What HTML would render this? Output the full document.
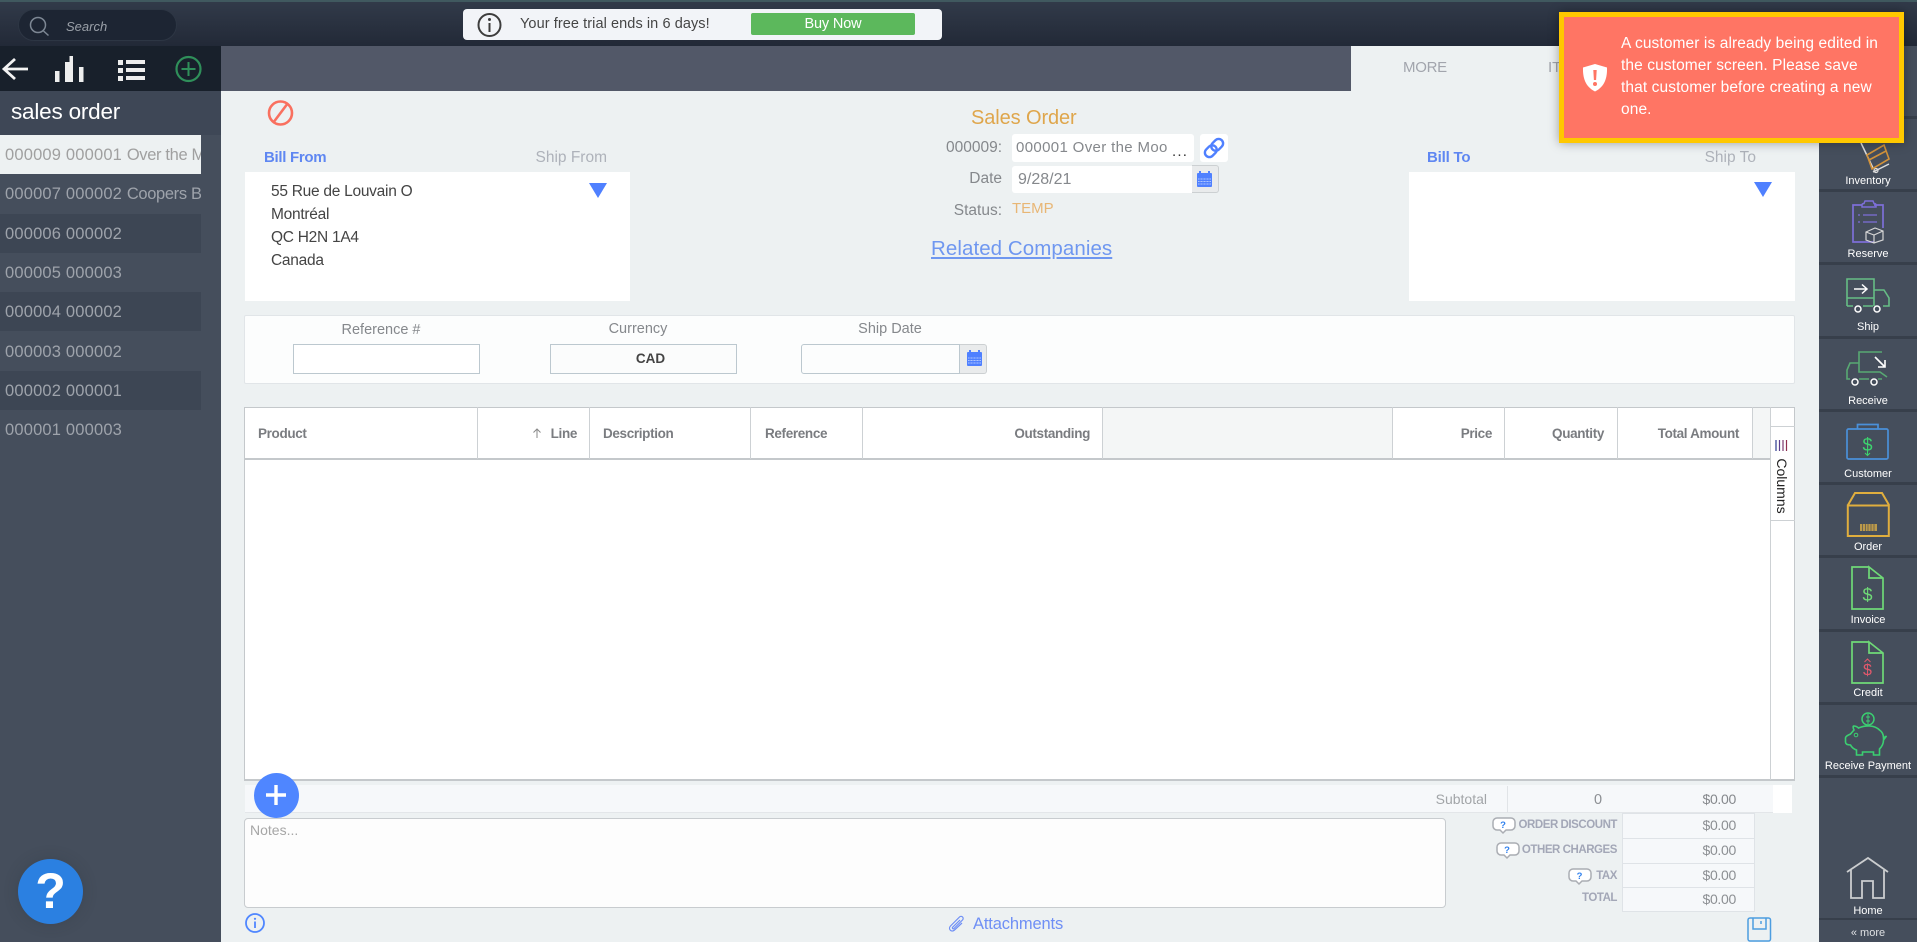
<!DOCTYPE html>
<html><head><meta charset="utf-8"><title>Sales Order</title>
<style>
*{box-sizing:border-box}
html,body{margin:0;padding:0;width:1917px;height:942px;overflow:hidden;background:#edf1f2;font-family:"Liberation Sans",sans-serif}
.a{position:absolute;white-space:nowrap}
.l{position:absolute;left:0;width:201px;height:39.3px;line-height:41.5px;padding-left:5px;font-size:16.5px;color:#9ea3ab;overflow:hidden;white-space:nowrap;letter-spacing:.18px}
.l span{letter-spacing:-.35px}
.h{position:absolute;top:408px;height:52px;line-height:52px;font-size:13.5px;font-weight:bold;color:#7a7c80;white-space:nowrap;letter-spacing:-.35px}
.v{position:absolute;top:407px;width:1px;height:52px;background:#cdd1d4}
.s{position:absolute;left:1819px;width:98px;height:3px;background:#373f4b}
.t{position:absolute;left:1819px;width:98px;text-align:center;font-size:11px;color:#fff;line-height:14px;white-space:nowrap}
.g{font-size:15.5px;color:#85888c}
.k{font-size:11.5px;font-weight:bold;color:#a3a7b7;line-height:14px;letter-spacing:-.45px}
.tr{position:absolute;left:1622px;width:133px;background:#f6f8fa;border:1px solid #dfe3e7;text-align:right;padding-right:18px;font-size:14px;letter-spacing:-.3px;color:#8c8f93}
</style></head><body>

<!-- top bar -->
<div class="a" style="left:0;top:0;width:1917px;height:46px;background:linear-gradient(#323b4a,#222937)"></div>
<div class="a" style="left:0;top:0;width:1917px;height:2px;background:#40595f"></div>
<div class="a" style="left:18px;top:9px;width:159px;height:32px;border-radius:16px;background:#1d2533;border:1px solid #2d3644"></div>
<div class="a" style="left:66px;top:18px;font-size:13px;font-style:italic;color:#9aa0a8;line-height:17px">Search</div>

<div class="a" style="left:463px;top:9px;width:479px;height:31px;background:#f2f4f8;border-radius:4px"></div>
<div class="a" style="left:520px;top:14px;font-size:14.5px;color:#454545;line-height:20px;letter-spacing:.08px">Your free trial ends in 6 days!</div>
<div class="a" style="left:751px;top:13px;width:164px;height:22px;background:#5cb85c;border-radius:2px;color:#fff;text-align:center;font-size:14.5px;line-height:22px;letter-spacing:-.15px">Buy Now</div>

<!-- sub bar -->
<div class="a" style="left:0;top:46px;width:221px;height:45px;background:#18202b"></div>
<div class="a" style="left:221px;top:46px;width:1130px;height:45px;background:#525868"></div>
<div class="a" style="left:1403px;top:58px;font-size:15px;color:#a2a5ad;line-height:20px;letter-spacing:-.3px">MORE</div>
<div class="a" style="left:1548px;top:58px;font-size:15px;color:#a2a5ad;line-height:20px">ITEMS</div>

<!-- left sidebar -->
<div class="a" style="left:0;top:91px;width:221px;height:851px;background:#454e5c"></div>
<div class="a" style="left:0;top:91px;width:221px;height:44px;background:#3e4756"></div>
<div class="a" style="left:11px;top:98px;font-size:22.5px;color:#fff;line-height:28px;letter-spacing:-.2px">sales order</div>
<div class="l" style="top:135px;background:#edf1f2;color:#a0a0a0">000009 000001 <span>Over the Moo</span></div>
<div class="l" style="top:174.3px">000007 000002 <span>Coopers Brewery</span></div>
<div class="l" style="top:213.6px;background:#3d4654">000006 000002</div>
<div class="l" style="top:252.9px">000005 000003</div>
<div class="l" style="top:292.2px;background:#3d4654">000004 000002</div>
<div class="l" style="top:331.5px">000003 000002</div>
<div class="l" style="top:370.8px;background:#3d4654">000002 000001</div>
<div class="l" style="top:410.1px">000001 000003</div>

<!-- right sidebar -->
<div class="a" style="left:1819px;top:46px;width:98px;height:896px;background:#454e5c"></div>
<div class="s" style="top:116px"></div><div class="s" style="top:189px"></div><div class="s" style="top:262px"></div><div class="s" style="top:336px"></div><div class="s" style="top:409px"></div><div class="s" style="top:482px"></div><div class="s" style="top:555px"></div><div class="s" style="top:629px"></div><div class="s" style="top:702px"></div><div class="s" style="top:775px"></div><div class="s" style="top:918px;height:2px"></div>
<div class="t" style="top:174px">Inventory</div>
<div class="t" style="top:247px">Reserve</div>
<div class="t" style="top:320px">Ship</div>
<div class="t" style="top:394px">Receive</div>
<div class="t" style="top:467px">Customer</div>
<div class="t" style="top:540px">Order</div>
<div class="t" style="top:613px">Invoice</div>
<div class="t" style="top:686px">Credit</div>
<div class="t" style="top:759px">Receive Payment</div>
<div class="t" style="top:904px">Home</div>
<div class="t" style="top:926px;color:#dfe1e4">« more</div>

<!-- address blocks -->
<div class="a" style="left:264px;top:148px;font-size:15px;font-weight:bold;color:#5f87f2;line-height:20px;letter-spacing:-.3px">Bill From</div>
<div class="a" style="right:1310px;top:148px;font-size:15.5px;color:#aeb2ba;line-height:20px">Ship From</div>
<div class="a" style="left:245px;top:172px;width:385px;height:129px;background:#fff"></div>
<div class="a" style="left:271px;top:180px;font-size:15.5px;color:#444;line-height:23px;letter-spacing:-.27px">55 Rue de Louvain O<br>Montréal<br>QC H2N 1A4<br>Canada</div>

<div class="a" style="left:1427px;top:148px;font-size:15px;font-weight:bold;color:#5f87f2;line-height:20px;letter-spacing:-.2px">Bill To</div>
<div class="a" style="right:161px;top:148px;font-size:15.5px;color:#aeb2ba;line-height:20px">Ship To</div>
<div class="a" style="left:1409px;top:172px;width:386px;height:129px;background:#fff"></div>

<!-- center header -->
<div class="a" style="left:971px;top:105px;font-size:20px;color:#dfa64c;line-height:26px;letter-spacing:-.1px">Sales Order</div>
<div class="a g" style="right:915px;top:138px;line-height:20px">000009:</div>
<div class="a" style="left:1012px;top:134px;width:182px;height:28px;background:#fff;border-radius:3px"></div>
<div class="a" style="left:1016px;top:138px;width:155px;overflow:hidden;font-size:15px;color:#85888c;line-height:20px;letter-spacing:.35px">000001 Over the Moo</div>
<div class="a" style="left:1172px;top:142px;font-size:15px;color:#333;line-height:20px;letter-spacing:1.2px">...</div>
<div class="a" style="left:1200px;top:134px;width:28px;height:28px;background:#fff;border-radius:3px"></div>
<div class="a g" style="right:915px;top:169px;line-height:20px">Date</div>
<div class="a" style="left:1012px;top:166px;width:180px;height:27px;background:#fff;border-radius:3px 0 0 3px"></div>
<div class="a" style="left:1192px;top:165px;width:27px;height:28px;background:#e9ebec;border:1px solid #ccd0d2;border-left:0;border-radius:0 3px 3px 0"></div>
<div class="a" style="left:1018px;top:170px;font-size:16px;color:#85888c;line-height:20px">9/28/21</div>
<div class="a g" style="right:915px;top:201px;line-height:20px">Status:</div>
<div class="a" style="left:1012px;top:199px;font-size:15px;color:#e8b675;line-height:20px">TEMP</div>
<div class="a" style="left:931px;top:236px;font-size:20.5px;color:#6f97f0;line-height:26px;text-decoration:underline;letter-spacing:.07px">Related Companies</div>

<!-- reference panel -->
<div class="a" style="left:244px;top:315px;width:1551px;height:69px;background:#fcfdfd;border:1px solid #e1e5e8;border-radius:2px"></div>
<div class="a" style="left:281px;width:200px;text-align:center;top:321px;font-size:14.5px;color:#85888c;line-height:18px">Reference #</div>
<div class="a" style="left:538px;width:200px;text-align:center;top:320px;font-size:14.5px;color:#85888c;line-height:18px">Currency</div>
<div class="a" style="left:790px;width:200px;text-align:center;top:320px;font-size:14.5px;color:#85888c;line-height:18px">Ship Date</div>
<div class="a" style="left:293px;top:344px;width:187px;height:30px;background:#fff;border:1px solid #bcc8cf"></div>
<div class="a" style="left:550px;top:344px;width:187px;height:30px;background:#fbfcfc;border:1px solid #bcc8cf;text-align:center;font-size:13.5px;font-weight:bold;color:#444;line-height:28px;padding-left:14px">CAD</div>
<div class="a" style="left:801px;top:344px;width:159px;height:30px;background:#fcfdfd;border:1px solid #bcc8cf;border-radius:3px 0 0 3px"></div>
<div class="a" style="left:960px;top:344px;width:27px;height:30px;background:#e9ebec;border:1px solid #ccd0d2;border-left:0;border-radius:0 3px 3px 0"></div>

<!-- grid -->
<div class="a" style="left:244px;top:407px;width:1551px;height:374px;background:#fff;border:1px solid #c4c8cb;border-width:1px 1px 2px 1px"></div>
<div class="a" style="left:1102px;top:408px;width:290px;height:51px;background:#f4f6f6"></div>
<div class="a" style="left:1752px;top:408px;width:18px;height:51px;background:#f4f6f6"></div>
<div class="a" style="left:245px;top:458px;width:1525px;height:2px;background:#c4c8cb"></div>
<div class="v" style="left:477px"></div><div class="v" style="left:589px"></div><div class="v" style="left:750px"></div><div class="v" style="left:862px"></div><div class="v" style="left:1102px"></div><div class="v" style="left:1392px"></div><div class="v" style="left:1504px"></div><div class="v" style="left:1617px"></div><div class="v" style="left:1752px"></div>
<div class="a" style="left:1770px;top:407px;width:1px;height:373px;background:#cdd1d4"></div>
<div class="a" style="left:1770px;top:426px;width:25px;height:1px;background:#cdd1d4"></div>
<div class="a" style="left:1770px;top:520px;width:25px;height:1px;background:#cdd1d4"></div>
<div class="h" style="left:258px">Product</div>
<div class="h" style="right:1340px">Line</div>
<div class="h" style="left:603px">Description</div>
<div class="h" style="left:765px">Reference</div>
<div class="h" style="right:827px">Outstanding</div>
<div class="h" style="right:425px">Price</div>
<div class="h" style="right:313px">Quantity</div>
<div class="h" style="right:178px">Total Amount</div>
<div class="a" style="left:1745px;top:478px;width:74px;height:16px;line-height:16px;font-size:14px;color:#222;transform:rotate(90deg);text-align:center">Columns</div>

<!-- subtotal -->
<div class="a" style="left:245px;top:785px;width:1528px;height:28px;background:#f6f8fa;border-bottom:1px solid #e3e6e9"></div>
<div class="a" style="left:1773px;top:785px;width:19px;height:28px;background:#fff"></div>
<div class="a" style="left:1507px;top:786px;width:1px;height:27px;background:#e1e4e7"></div>
<div class="a" style="right:430px;top:790px;font-size:14px;color:#a2a5a8;line-height:18px">Subtotal</div>
<div class="a" style="left:1594px;top:791px;font-size:14.5px;color:#8c8f93;line-height:18px">0</div>
<div class="a" style="right:181px;top:790px;font-size:14px;letter-spacing:-.3px;color:#85888c;line-height:18px">$0.00</div>

<!-- notes -->
<div class="a" style="left:244px;top:818px;width:1202px;height:90px;background:#fdfdfd;border:1px solid #c8cccf;border-radius:4px"></div>
<div class="a" style="left:250px;top:821px;font-size:14px;color:#a6a6a6;line-height:18px">Notes...</div>

<!-- totals -->
<div class="tr" style="top:813px;height:26px;line-height:23px">$0.00</div>
<div class="tr" style="top:838px;height:26px;line-height:23px">$0.00</div>
<div class="tr" style="top:863px;height:25px;line-height:22px">$0.00</div>
<div class="tr" style="top:887px;height:25px;line-height:23px">$0.00</div>
<div class="a k" style="right:300px;top:818px">ORDER DISCOUNT</div>
<div class="a k" style="right:300px;top:843px">OTHER CHARGES</div>
<div class="a k" style="right:300px;top:869px">TAX</div>
<div class="a k" style="right:300px;top:891px">TOTAL</div>

<div class="a" style="left:973px;top:914px;font-size:16.5px;color:#6f8ff5;line-height:20px;letter-spacing:-.15px">Attachments</div>

<!-- buttons -->
<div class="a" style="left:254px;top:773px;width:45px;height:45px;border-radius:50%;background:#4f86ff"></div>
<div class="a" style="left:18px;top:859px;width:65px;height:65px;border-radius:50%;background:#2b80e1;box-shadow:0 0 14px rgba(40,50,60,.25);color:#fff;text-align:center;font-size:50px;font-weight:bold;line-height:65px">?</div>

<!-- icons -->
<svg class="a" style="left:0;top:0" width="1917" height="942" viewBox="0 0 1917 942" fill="none">
<!-- search -->
<circle cx="38" cy="25" r="7.5" stroke="#7d8794" stroke-width="1.5"/><path d="M43.5 31l5 4.500" stroke="#7d8794" stroke-width="1.5"/>
<!-- trial info -->
<circle cx="489.5" cy="25" r="11" stroke="#3d3d3d" stroke-width="2"/><circle cx="489.5" cy="19.5" r="1.5" fill="#3d3d3d"/><path d="M489.5 23v9" stroke="#3d3d3d" stroke-width="2"/>
<!-- back -->
<path d="M28 69H5M15 59L4 69l11 10" stroke="#f3f3f3" stroke-width="2.800"/>
<!-- bars -->
<path d="M55 82V71h4.500v11zM65 82V62h4.500v20zM69.500 56h3.500v26h-3.500zM79 82V67h4.500v15z" fill="#eee" stroke="none"/>
<!-- list -->
<path d="M118 60h5v5h-5zM118 68h5v5h-5zM118 76h5v5h-5zM126 60h19v4h-19zM126 68h19v4h-19zM126 76h19v4h-19z" fill="#eee"/>
<!-- plus circle -->
<circle cx="188.5" cy="69" r="12" stroke="#2f8f5a" stroke-width="2.200"/><path d="M188.500 62v14M181.500 69h14" stroke="#2f8f5a" stroke-width="2"/>
<!-- ban -->
<circle cx="280.5" cy="113" r="11.5" stroke="#f9705f" stroke-width="2.600"/><path d="M273 123l15-20" stroke="#f9705f" stroke-width="2.600"/>
<!-- triangles -->
<path d="M589 183h18l-9 15z" fill="#4f80ff"/><path d="M1754 182h18l-9 15z" fill="#4f80ff"/>
<!-- link -->
<g stroke="#4f80ff" stroke-width="2.400" transform="rotate(-45 1214 148)"><rect x="1203" y="143.500" width="13" height="9" rx="4.500"/><rect x="1212" y="143.500" width="13" height="9" rx="4.500"/></g>
<!-- calendars -->
<g><rect x="1197" y="173" width="15" height="14" rx="1" fill="#4f80ff"/><path d="M1200 171v3M1209 171v3" stroke="#4f80ff" stroke-width="2"/><path d="M1198 179h13M1198 181.500h13M1198 184h13" stroke="#cfdcff" stroke-width=".8"/><path d="M1200 178v8M1203 178v8M1206 178v8M1209 178v8" stroke="#4f80ff" stroke-width=".8"/></g>
<g transform="translate(-230 179)"><rect x="1197" y="173" width="15" height="14" rx="1" fill="#4f80ff"/><path d="M1200 171v3M1209 171v3" stroke="#4f80ff" stroke-width="2"/><path d="M1198 179h13M1198 181.500h13M1198 184h13" stroke="#cfdcff" stroke-width=".8"/><path d="M1200 178v8M1203 178v8M1206 178v8M1209 178v8" stroke="#4f80ff" stroke-width=".8"/></g>
<!-- sort arrow -->
<path d="M537 438v-9M533.500 432.500L537 429l3.500 3.500" stroke="#888" stroke-width="1"/>
<!-- columns icon -->
<path d="M1776 440v11" stroke="#2b3a8f" stroke-width="1.200"/><path d="M1779.500 440v11" stroke="#5a3f8f" stroke-width="1.200"/><path d="M1783 440v11" stroke="#7a3a6f" stroke-width="1.200"/><path d="M1786.500 440v11" stroke="#8f2f4f" stroke-width="1.200"/>
<!-- plus -->
<path d="M276 785v20M266 795h20" stroke="#fff" stroke-width="3.400"/>
<!-- info bottom -->
<circle cx="255" cy="923" r="9" stroke="#4f86ff" stroke-width="1.800"/><circle cx="255" cy="918.800" r="1.100" fill="#4f86ff"/><path d="M255 921.500v6.500" stroke="#4f86ff" stroke-width="1.800"/>
<!-- paperclip -->
<path d="M962 923l-7.500 7c-3 2.800-6.800-1-4-4l9-9c2-2 5 .8 3 3l-8.500 8.500c-.9.900-2.200-.3-1.300-1.300l7.300-7.200" stroke="#6f8ff5" stroke-width="1.200"/>
<!-- save -->
<path d="M1750 918h18.500a2 2 0 0 1 2 2v19a2 2 0 0 1-2 2h-18.500a2 2 0 0 1-2-2v-19a2 2 0 0 1 2-2zM1753 918v11h13v-11M1761 921v3" stroke="#4d9de0" stroke-width="1.500"/>
<!-- bubbles -->
<g><path d="M1497 818h14a4 4 0 0 1 4 4v4a4 4 0 0 1-4 4h-5l-3 3-3-3h-3a4 4 0 0 1-4-4v-4a4 4 0 0 1 4-4z" fill="#fff" stroke="#aaadb3" stroke-width="1.500"/></g>
<g transform="translate(4 25)"><path d="M1497 818h14a4 4 0 0 1 4 4v4a4 4 0 0 1-4 4h-5l-3 3-3-3h-3a4 4 0 0 1-4-4v-4a4 4 0 0 1 4-4z" fill="#fff" stroke="#aaadb3" stroke-width="1.500"/></g>
<g transform="translate(76 51)"><path d="M1497 818h14a4 4 0 0 1 4 4v4a4 4 0 0 1-4 4h-5l-3 3-3-3h-3a4 4 0 0 1-4-4v-4a4 4 0 0 1 4-4z" fill="#fff" stroke="#aaadb3" stroke-width="1.500"/></g>
<g font-family="Liberation Sans,sans-serif" font-size="9.500" font-weight="bold" fill="#2f80ed" text-anchor="middle"><text x="1503" y="828">?</text><text x="1507" y="853">?</text><text x="1579.500" y="879">?</text></g>

<!-- Inventory -->
<path d="M1861 143l12 25M1873 172l16-8" stroke="#dcdcdc" stroke-width="1.500"/><circle cx="1876" cy="170.500" r="2" stroke="#dcdcdc" stroke-width="1.200"/>
<path d="M1867 155l17-10 5 14-17 10zM1869 160l17-9" stroke="#d2923a" stroke-width="1.600"/>
<!-- Reserve -->
<path d="M1874 242h-21v-37h9M1874 205h9v23" stroke="#7d6fd8" stroke-width="1.700"/>
<path d="M1862 207v-2c0-1 1-1.500 2-1.500l1-2.500h8l1 2.500c1 0 2 .5 2 1.500v2z" stroke="#7d6fd8" stroke-width="1.500"/>
<path d="M1858 215h2M1863 215h14M1858 222h2M1863 222h14" stroke="#7d6fd8" stroke-width="1.300"/>
<path d="M1866 232l9-4 8 3v9l-9 3-8-3zM1866 232l8 3 9-4M1874 235v8" stroke="#d6d6d6" stroke-width="1.200"/>
<!-- Ship -->
<path d="M1847 306v-27h27v27M1847 298h27" stroke="#66bd85" stroke-width="1.600"/>
<path d="M1874 290h10l5 8v8h-6M1847 306h6M1863 306h10" stroke="#66bd85" stroke-width="1.600"/>
<circle cx="1858" cy="309" r="3" stroke="#fff" stroke-width="1.500"/><circle cx="1877" cy="309" r="3" stroke="#fff" stroke-width="1.500"/>
<path d="M1854 289h12M1862 284.500l5 4.500-5 4.500" stroke="#fff" stroke-width="1.500"/>
<!-- Receive -->
<path d="M1882 352h-23v20h21l7 5M1859 363h-9l-3 7v9h3M1859 379h10M1878 379h4" stroke="#58a973" stroke-width="1.600"/>
<circle cx="1855" cy="382" r="3" stroke="#fff" stroke-width="1.500"/><circle cx="1874" cy="382" r="3" stroke="#fff" stroke-width="1.500"/>
<path d="M1875 357l10 10M1885 360v7h-7" stroke="#fff" stroke-width="1.600"/>
<!-- Customer -->
<rect x="1847" y="429" width="41" height="30" rx="1.500" stroke="#4a90d9" stroke-width="1.700"/>
<path d="M1857.500 429v-4.500h20.500v4.500" stroke="#4a90d9" stroke-width="1.700"/>
<text x="1867.500" y="451" font-family="Liberation Sans,sans-serif" font-size="18" fill="#3dd36f" text-anchor="middle">$</text>
<path d="M1867.500 451v4.500M1865 453l2.500 2.500 2.500-2.500" stroke="#3dd36f" stroke-width="1"/>
<!-- Order -->
<path d="M1848 505l7-12h27l7 12M1847.800 505.500h41v30.500h-41z" stroke="#e0ae3e" stroke-width="2"/>
<path d="M1860 524h17v7h-17z" fill="#bc9a4a"/><path d="M1862.500 524v7M1865.500 524v7M1868 524v7M1871 524v7M1874 524v7" stroke="#6f6550" stroke-width="1"/>
<!-- Invoice -->
<path d="M1869 567h-17v42h31v-31l-14-11v11h14" stroke="#6fd977" stroke-width="1.700"/>
<text x="1867.500" y="601" font-family="Liberation Sans,sans-serif" font-size="18" fill="#6fd977" text-anchor="middle">$</text>
<!-- Credit -->
<path d="M1869 642h-17v41h31v-30l-14-11v11h14" stroke="#6fd977" stroke-width="1.700"/>
<text x="1867.500" y="675" font-family="Liberation Sans,sans-serif" font-size="16" fill="#e2586c" text-anchor="middle">$</text>
<path d="M1867.500 660v-1M1864.500 662l3-3 3 3" stroke="#e2586c" stroke-width="1"/>
<!-- Piggy -->
<circle cx="1868" cy="719" r="6" stroke="#3bcf71" stroke-width="1.500"/><path d="M1868 714v10M1866 717h4M1866 721h4" stroke="#3bcf71" stroke-width="1"/>
<path d="M1854 730c-1-2-1-4-.500-4 2 0 4 1 5 2 7-3 16-3 21 2 3 2 4 5 4 8l3-2-3 4c0 4-2 7-4 9v6h-6v-3h-11v3h-6v-5c-3-1-5-3-6-5-3 0-5-1-5-3v-4c0-2 3-3 5-4z" stroke="#3bcf71" stroke-width="1.600"/>
<circle cx="1856" cy="735" r="1.800" stroke="#3bcf71" stroke-width="1"/>
<!-- Home -->
<path d="M1847 872l21-14 20 14M1851 870v28h11v-17h11v17h11v-28" stroke="#cbcdcf" stroke-width="1.800"/>
</svg>

<!-- toast -->
<div class="a" style="left:1559px;top:12px;width:345px;height:131px;background:#ff7564;border:5px solid #ffc800;box-shadow:0 0 10px rgba(0,0,0,.35)"></div>
<div class="a" style="left:1621px;top:33px;font-size:15.5px;color:#fff;line-height:22px;letter-spacing:.1px">A customer is already being edited in<br>the customer screen. Please save<br>that customer before creating a new<br>one.</div>
<svg class="a" style="left:1582px;top:63px" width="26" height="29" viewBox="0 0 26 29"><path d="M13 1l12 3.500c.300 10-2 19-12 24C3 23.500 .700 14.500 1 4.500z" fill="#fff"/><path d="M11.300 7h3.400l-.6 10h-2.200zM13 19a2 2 0 1 1 0 4 2 2 0 0 1 0-4z" fill="#ff7564"/></svg>
</body></html>
